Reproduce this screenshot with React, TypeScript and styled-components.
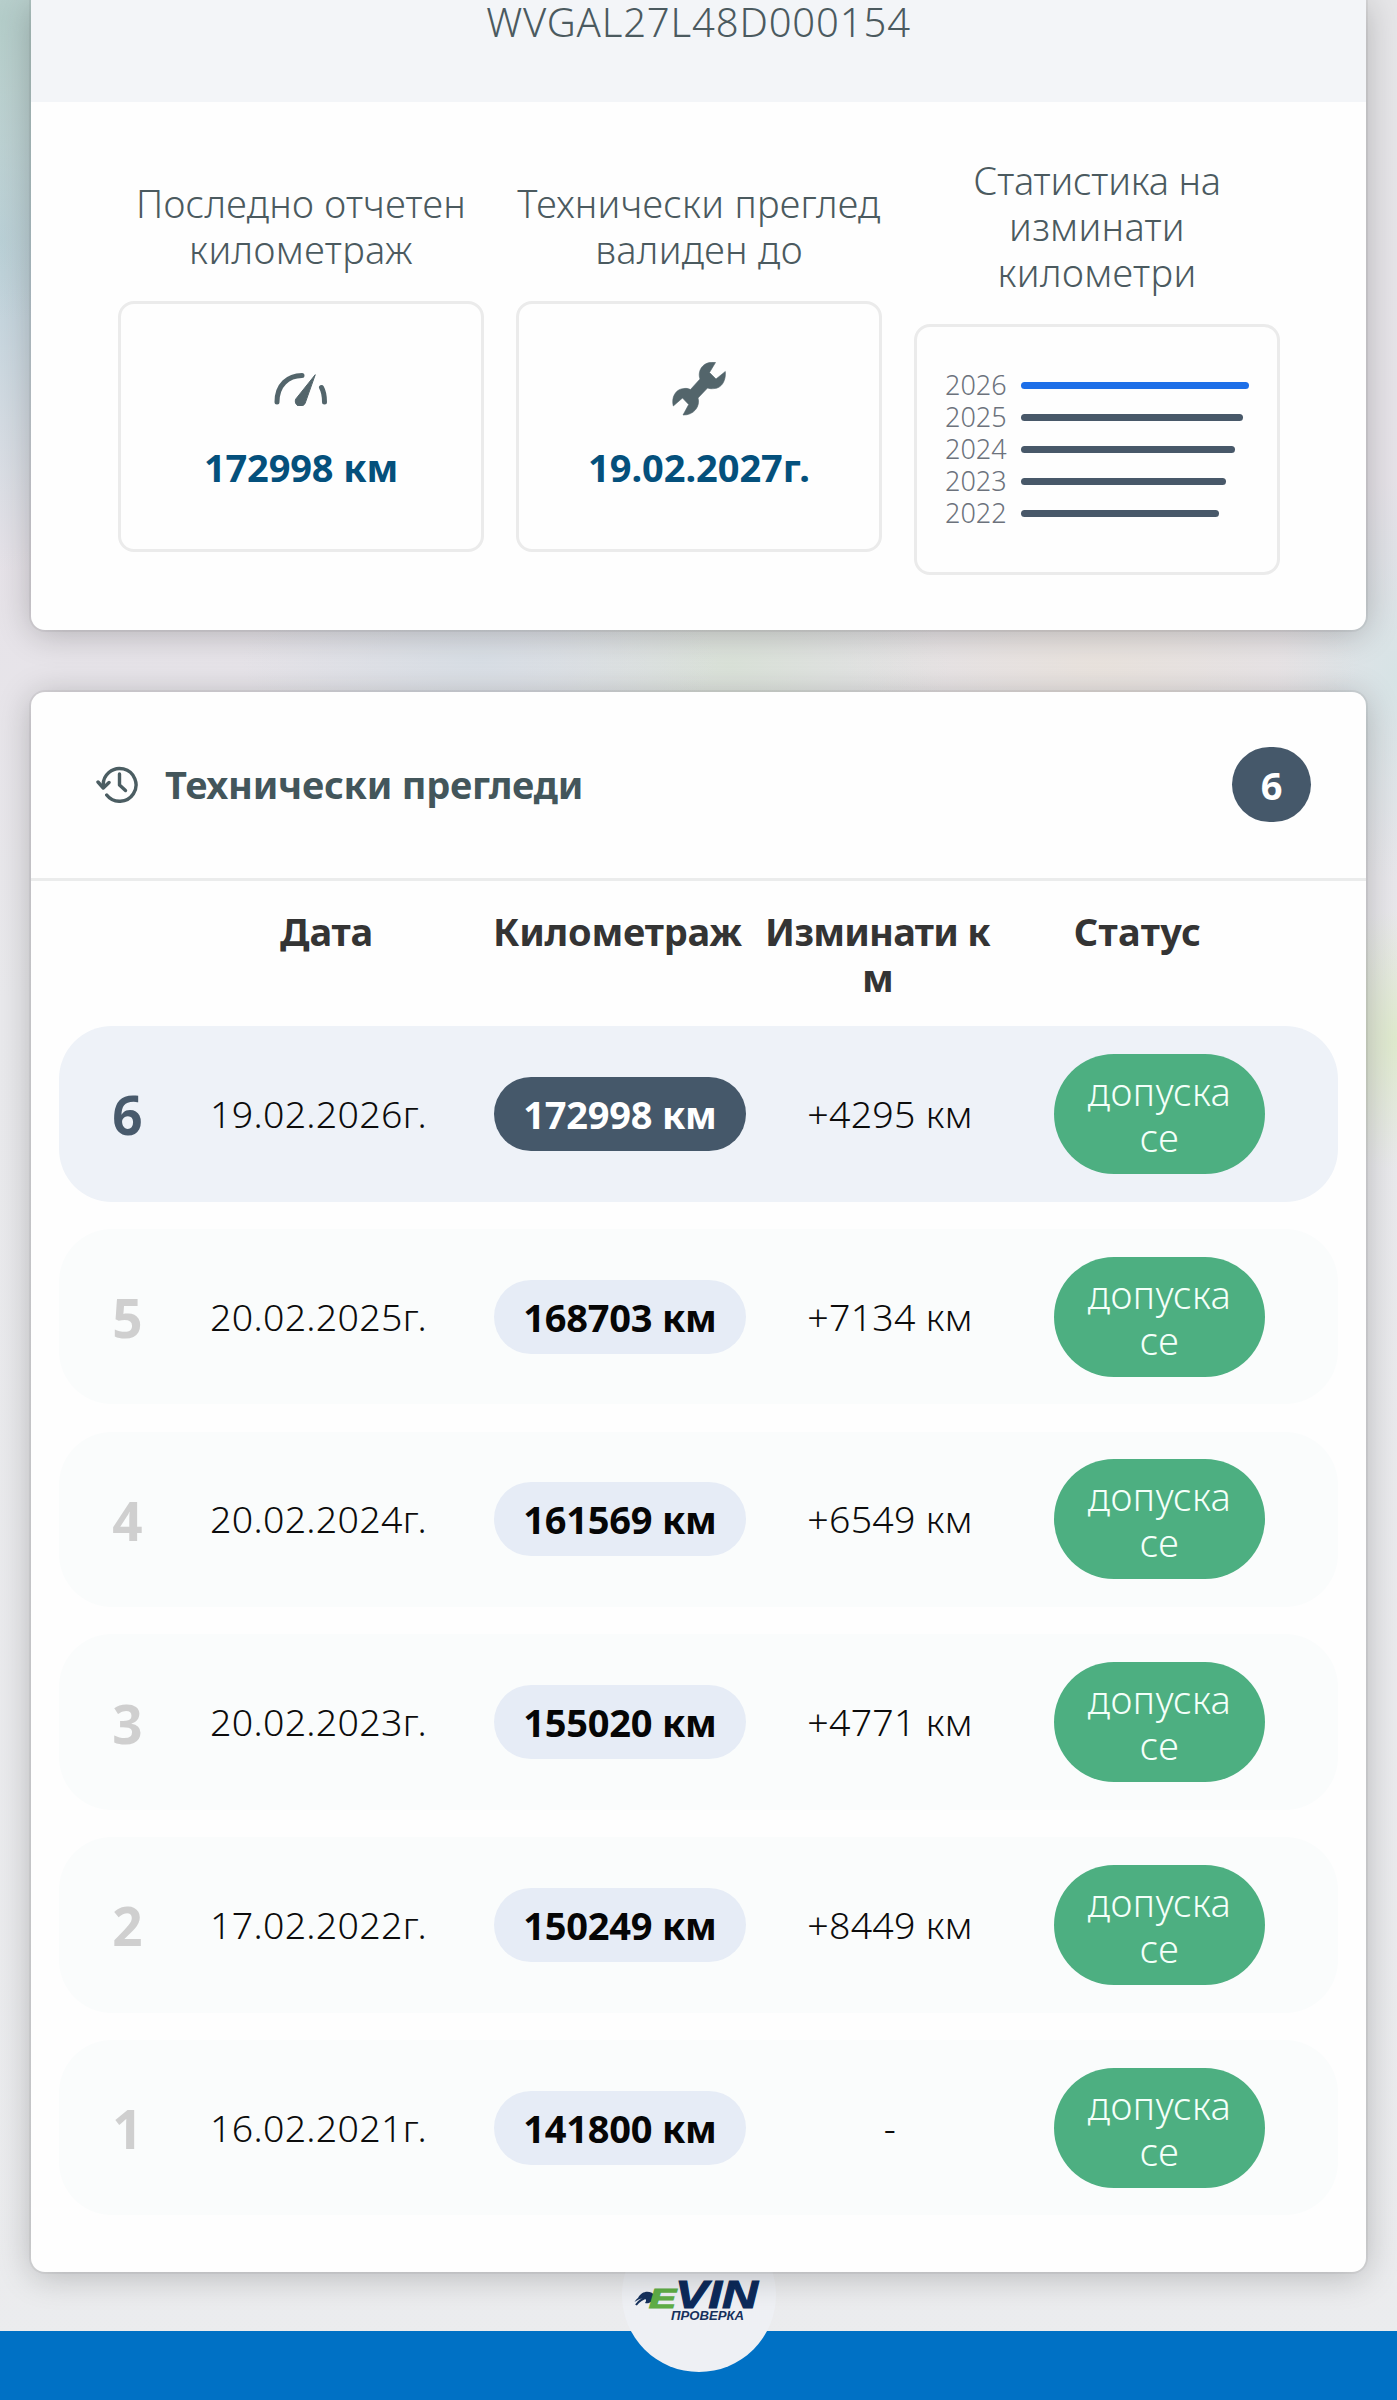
import React from "react";
import styled, { createGlobalStyle } from "styled-components";

const Global = createGlobalStyle`
  *, *::before, *::after { box-sizing: border-box; }
  html, body { margin: 0; padding: 0; }
  body { overflow: hidden; font-family: "Noto Sans", "Open Sans", sans-serif; }
`;

const Page = styled.div`
  position: relative;
  height: 2400px;
  width: 1397px;
  overflow: hidden;
  display: flex;
  flex-direction: column;
  background:
    radial-gradient(ellipse 260px 300px at 0 20px, rgba(178, 204, 200, 0.95), rgba(178, 204, 200, 0) 100%),
    radial-gradient(ellipse 200px 330px at 0 240px, rgba(186, 208, 218, 0.95), rgba(186, 208, 218, 0) 100%),
    radial-gradient(ellipse 240px 90px at 480px 660px, rgba(214, 222, 229, 0.85), rgba(214, 222, 229, 0) 100%),
    radial-gradient(ellipse 220px 90px at 730px 665px, rgba(216, 226, 214, 0.85), rgba(216, 226, 214, 0) 100%),
    radial-gradient(ellipse 260px 90px at 1100px 665px, rgba(234, 227, 220, 0.85), rgba(234, 227, 220, 0) 100%),
    radial-gradient(ellipse 120px 200px at 1397px 680px, rgba(213, 227, 229, 0.9), rgba(213, 227, 229, 0) 100%),
    radial-gradient(ellipse 90px 130px at 1397px 1040px, rgba(222, 234, 202, 0.9), rgba(222, 234, 202, 0) 100%),
    linear-gradient(#e6e6e8 0, #e6e2e8 540px, #e9e9ec 1000px, #ebecee 2400px);
`;

const Card = styled.section<{ $h: number; $gap?: number }>`
  position: relative;
  z-index: 2;
  flex: none;
  height: ${(p) => p.$h}px;
  margin: ${(p) => p.$gap ?? 0}px 31px 0;
  background: #fefefe;
  border-radius: ${(p) => (p.$gap ? "14px" : "0 0 14px 14px")};
  box-shadow: 0 0 0 2px rgba(0, 0, 0, 0.05), 0 4px 34px rgba(0, 0, 0, 0.23);
`;

const VinBar = styled.header`
  height: 102px;
  background: #f3f5f8;
  color: #4b5a5f;
  text-align: center;
  font-size: 40px;
  font-weight: 300;
  line-height: 44px;
  letter-spacing: 0.85px;
`;

const Stats = styled.div`
  display: flex;
  align-items: center;
  gap: 32px;
  padding: 55px 86px 0 87px;
`;

const Stat = styled.div`
  flex: none;
  width: 366px;
`;

const StatTitle = styled.h3`
  margin: 0 -10px 29px;
  color: #4b5a5f;
  text-align: center;
  font-size: 38px;
  font-weight: 300;
  line-height: 46px;
`;

const TitleLine = styled.span<{ $ls?: number }>`
  display: block;
  letter-spacing: ${(p) => p.$ls ?? 0.28}px;
`;

const StatBox = styled.div`
  height: 251px;
  border: 3px solid #ebebeb;
  border-radius: 16px;
  display: flex;
  flex-direction: column;
  align-items: center;
`;

const IconSlot = styled.div`
  height: 54px;
  margin-top: 58px;
  display: flex;
  align-items: center;
  color: #53656b;
`;

const StatValue = styled.strong<{ $ls: number }>`
  margin-top: 28px;
  color: #04507c;
  font-size: 38px;
  font-weight: 700;
  line-height: 46px;
  letter-spacing: ${(p) => p.$ls}px;
`;

const Years = styled.div`
  width: 100%;
  padding: 42px 0 0 28px;
`;

const YearRow = styled.div`
  display: flex;
  align-items: center;
  gap: 14px;
  height: 32px;
  color: #6c727c;
  font-size: 27px;
  font-weight: 300;
`;

const YearLabel = styled.span`
  width: 62px;
  line-height: 32px;
`;

const YearBar = styled.i<{ $current: boolean }>`
  height: 7px;
  border-radius: 4px;
  background: ${(p) => (p.$current ? "#1d6fe8" : "#485869")};
`;

const SectionHead = styled.header`
  height: 189px;
  padding: 0 55px 2px 65px;
  border-bottom: 3px solid #ebecec;
  display: flex;
  align-items: center;
`;

const SectionTitle = styled.h2`
  flex: 1;
  margin: 0 0 0 27px;
  color: #43565b;
  font-size: 38px;
  font-weight: 700;
  line-height: 46px;
  letter-spacing: -0.25px;
`;

const Count = styled.span`
  width: 79px;
  height: 75px;
  border-radius: 38px;
  background: #45586a;
  color: #fff;
  text-align: center;
  font-size: 38px;
  font-weight: 700;
  line-height: 76px;
`;

const Grid = styled.div`
  display: grid;
  grid-template-columns: 137px 245px 358px 182px 1fr;
  justify-items: center;
`;

const HeadRow = styled(Grid)`
  height: 145px;
  margin: 0 28px;
  padding-top: 27px;
  color: #343434;
  text-align: center;
  font-size: 38px;
  font-weight: 700;
  line-height: 46px;
`;

const HeadCell = styled.span<{ $shift: number; $ls?: number }>`
  margin-left: ${(p) => p.$shift}px;
  letter-spacing: ${(p) => p.$ls ?? -0.2}px;
  white-space: pre;
`;

const Row = styled(Grid)<{ $active: boolean }>`
  align-items: center;
  height: 175.5px;
  margin: 0 28px 27.3px;
  border-radius: 53px;
  background: ${(p) => (p.$active ? "#eef2f8" : "#fafcfc")};
`;

const Index = styled.b<{ $active: boolean }>`
  padding-top: 3px;
  color: ${(p) => (p.$active ? "#485a6c" : "#cfcfcf")};
  font-size: 53px;
  font-weight: 700;
  line-height: 60px;
`;

const Plain = styled.span`
  color: #0c0c0c;
  font-size: 37.5px;
  font-weight: 300;
  line-height: 46px;
  letter-spacing: 0.3px;
  white-space: nowrap;
`;

const Mileage = styled.span<{ $active: boolean }>`
  width: 252px;
  height: 74px;
  border-radius: 37px;
  background: ${(p) => (p.$active ? "#45586a" : "#e6ecf6")};
  color: ${(p) => (p.$active ? "#fff" : "#060606")};
  text-align: center;
  font-size: 38px;
  font-weight: 700;
  line-height: 75px;
  letter-spacing: -0.25px;
`;

const Status = styled.span`
  width: 211px;
  height: 120px;
  padding-top: 14px;
  border-radius: 60px;
  background: #4daf81;
  color: #f4fff9;
  text-align: center;
  white-space: pre-line;
  font-size: 38px;
  font-weight: 300;
  line-height: 46px;
  letter-spacing: 0.45px;
`;

const Footer = styled.footer`
  position: relative;
  height: 69px;
  margin-top: 59px;
  flex: none;
  display: flex;
  justify-content: center;
  background: #0071c5;
`;

const LogoDisc = styled.div`
  flex: none;
  width: 154px;
  height: 154px;
  margin-top: -113px;
  border-radius: 50%;
  background: #eef0f4;
`;

const GaugeIcon = () => (
  <svg width="54" height="34" viewBox="0 0 54 34" fill="none" stroke="currentColor" strokeWidth="5" strokeLinecap="round">
    <path d="M3 30C3 13 14 3.5 28 3.5" />
    <path d="M47.500 15.500C49.500 19 50.500 25 50.500 30" />
    <path d="M41 3L21.800 27A5 5 0 0 0 31 31.500Z" fill="currentColor" strokeWidth="1" strokeLinejoin="round" />
  </svg>
);

const WrenchIcon = () => (
  <svg width="54" height="54" viewBox="0 0 54 54" fill="currentColor" stroke="currentColor" strokeWidth="0.600" strokeLinejoin="round">
    <path d="M43.500 .5L37.500 10.500L44 17L53.300 9.500C54.200 18 50 26.300 42 26.600C39 27 37 26.500 35.500 26L26 36C28.500 44 22 53.500 11 53L16.700 42.500L10.500 36L1.300 44C-.8 36 3 27 12 26.500C15 26 17 27 18.500 27.500L28 17C25 9 31 -1.500 43.500 .5Z" />
  </svg>
);

const HistoryIcon = () => (
  <svg width="42" height="37" viewBox="0 0 42 37" fill="none" stroke="#4b5d62" strokeWidth="3.400" strokeLinecap="round" strokeLinejoin="round">
    <path d="M7.300 20.500A16.400 16.400 0 1 1 10.700 29" />
    <path d="M2 16L7.300 22L13 16.500" />
    <path d="M23.500 8V19L29.500 24.500" />
  </svg>
);

const Logo = () => (
  <svg width="154" height="154" viewBox="0 0 154 154" fontFamily="'Liberation Sans', Arial, sans-serif" fontWeight="700" fontStyle="italic">
    <path d="M16 80C20 72 29 72 33.500 78C31 84 27 86 23 85C25 82.500 24 80.500 21 80.500C19 80.500 17 81 12.500 84C14 81.500 14.500 81 16 80Z" fill="#16315c" />
    <path d="M14 87C17 82 22 80 30 77.500" fill="none" stroke="#16315c" strokeWidth="2" />
    <text x="27" y="90" fontSize="27" textLength="27" lengthAdjust="spacingAndGlyphs" fill="#5fae46" stroke="#5fae46" strokeWidth="1.200">E</text>
    <text x="53" y="90" fontSize="38" textLength="83" lengthAdjust="spacingAndGlyphs" fill="#0c2a5b" stroke="#0c2a5b" strokeWidth="1">VIN</text>
    <text x="49" y="102" fontSize="12.500" textLength="73" lengthAdjust="spacingAndGlyphs" fill="#16315c">ПРОВЕРКА</text>
  </svg>
);

const years = [
  { year: 2026, width: 228 },
  { year: 2025, width: 222 },
  { year: 2024, width: 214 },
  { year: 2023, width: 205 },
  { year: 2022, width: 198 },
];

const inspections = [
  { n: 6, date: "19.02.2026г.", km: "172998 км", diff: "+4295 км" },
  { n: 5, date: "20.02.2025г.", km: "168703 км", diff: "+7134 км" },
  { n: 4, date: "20.02.2024г.", km: "161569 км", diff: "+6549 км" },
  { n: 3, date: "20.02.2023г.", km: "155020 км", diff: "+4771 км" },
  { n: 2, date: "17.02.2022г.", km: "150249 км", diff: "+8449 км" },
  { n: 1, date: "16.02.2021г.", km: "141800 км", diff: "-" },
];

export default function App() {
  return (
    <Page>
      <Global />
      <Card $h={630}>
        <VinBar>WVGAL27L48D000154</VinBar>
        <Stats>
          <Stat>
            <StatTitle>
              <TitleLine>Последно отчетен</TitleLine>
              <TitleLine $ls={0.4}>километраж</TitleLine>
            </StatTitle>
            <StatBox>
              <IconSlot><GaugeIcon /></IconSlot>
              <StatValue $ls={-0.15}>172998 км</StatValue>
            </StatBox>
          </Stat>
          <Stat>
            <StatTitle>
              <TitleLine>Технически преглед</TitleLine>
              <TitleLine>валиден до</TitleLine>
            </StatTitle>
            <StatBox>
              <IconSlot><WrenchIcon /></IconSlot>
              <StatValue $ls={-0.05}>19.02.2027г.</StatValue>
            </StatBox>
          </Stat>
          <Stat>
            <StatTitle>
              <TitleLine $ls={-0.2}>Статистика на</TitleLine>
              <TitleLine>изминати</TitleLine>
              <TitleLine $ls={0.4}>километри</TitleLine>
            </StatTitle>
            <StatBox>
              <Years>
                {years.map((y, i) => (
                  <YearRow key={y.year}>
                    <YearLabel>{y.year}</YearLabel>
                    <YearBar $current={i === 0} style={{ width: y.width }} />
                  </YearRow>
                ))}
              </Years>
            </StatBox>
          </Stat>
        </Stats>
      </Card>

      <Card $h={1580} $gap={62}>
        <SectionHead>
          <HistoryIcon />
          <SectionTitle>Технически прегледи</SectionTitle>
          <Count>6</Count>
        </SectionHead>
        <HeadRow>
          <span />
          <HeadCell $shift={16}>Дата</HeadCell>
          <HeadCell $shift={-5}>Километраж</HeadCell>
          <HeadCell $shift={-25} $ls={-0.75}>{"Изминати к\nм"}</HeadCell>
          <HeadCell $shift={-44} $ls={0.3}>Статус</HeadCell>
        </HeadRow>
        {inspections.map((r) => (
          <Row key={r.n} $active={r.n === 6}>
            <Index $active={r.n === 6}>{r.n}</Index>
            <Plain>{r.date}</Plain>
            <Mileage $active={r.n === 6}>{r.km}</Mileage>
            <Plain>{r.diff}</Plain>
            <Status>{"допуска\nсе"}</Status>
          </Row>
        ))}
      </Card>

      <Footer>
        <LogoDisc><Logo /></LogoDisc>
      </Footer>
    </Page>
  );
}
